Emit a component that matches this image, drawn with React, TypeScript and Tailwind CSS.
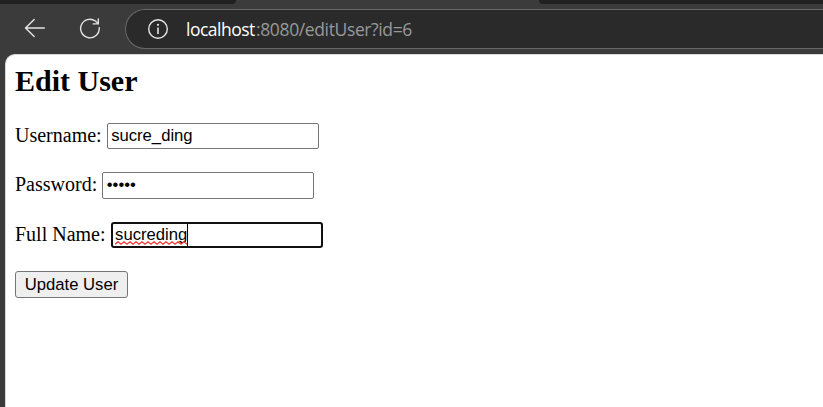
import type { ReactNode } from 'react';

const sans = "font-['Liberation_Sans',Arial,sans-serif]";

function BackIcon() {
  return (
    <svg width="22" height="20" viewBox="0 0 22 20" fill="none" stroke="#e4e4e4" strokeWidth="1.4" strokeLinecap="round" strokeLinejoin="round">
      <path d="M20.3 10H1.5M10.2 1.4L1.5 10L10.2 18.6" />
    </svg>
  );
}

function ReloadIcon() {
  return (
    <svg width="22" height="22" viewBox="0 0 22 22" fill="none" stroke="#e4e4e4" strokeWidth="1.4" strokeLinecap="round" strokeLinejoin="round">
      <path d="M20.2 9.6A9.3 9.3 0 1 1 16.4 3L19.2 5.5" />
      <path d="M19.3 0.9V5.9H14.2" />
    </svg>
  );
}

function InfoIcon() {
  return (
    <svg width="22" height="22" viewBox="0 0 22 22" fill="none" stroke="#e4e4e4">
      <circle cx="11" cy="11" r="9.3" strokeWidth="1.4" />
      <path d="M11 9.5V16" strokeWidth="1.6" />
      <circle cx="11" cy="6.8" r="1.1" fill="#e4e4e4" stroke="none" />
    </svg>
  );
}

function SpellingMark() {
  return (
    <svg className="absolute left-0 top-[17px]" width="73" height="4" viewBox="0 0 73 4" fill="none">
      <path
        d="M0 3.2L3 0.8L6 3.2L9 0.8L12 3.2L15 0.8L18 3.2L21 0.8L24 3.2L27 0.8L30 3.2L33 0.8L36 3.2L39 0.8L42 3.2L45 0.8L48 3.2L51 0.8L54 3.2L57 0.8L60 3.2L63 0.8L66 3.2L69 0.8L72 3.2"
        stroke="#ec3b32"
        strokeWidth="1.3"
      />
    </svg>
  );
}

function Row({ label, children }: { label: string; children: ReactNode }) {
  return (
    <div className="flex h-[27px] items-start gap-[5px]">
      <span className="whitespace-nowrap leading-[24px]">{label}</span>
      {children}
    </div>
  );
}

export default function App() {
  const field = `h-[26px] w-[212px] rounded-[2px] border border-[#767676] bg-white px-[3.5px] text-[16.67px] leading-[24px] text-black ${sans}`;
  return (
    <div className="flex h-[407px] w-[823px] flex-col overflow-hidden bg-[#3b3b3b]">
      <div className="flex h-[4px] shrink-0 justify-between">
        <div className="w-[236px] rounded-br-[8px] bg-[#202020]" />
        <div className="w-[284px] rounded-bl-[8px] bg-[#202020]" />
      </div>
      <div className="flex h-[50px] shrink-0 items-start pt-[5px]">
        <div className="ml-[24px] mt-[9px]"><BackIcon /></div>
        <div className="ml-[33px] mt-[9px]"><ReloadIcon /></div>
        <div className="ml-[24px] flex h-[40px] flex-1 items-center rounded-l-full border border-r-0 border-[#686868] bg-[#2a2a2a] pl-[21px]">
          <InfoIcon />
          <div className="-mt-px ml-[17px] flex whitespace-nowrap font-['Open_Sans','Noto_Sans',sans-serif] text-[17.5px] leading-[24px]">
            <span className="w-[70px] tracking-[-0.5px] text-white">localhost</span>
            <span className="tracking-[-0.37px] text-[#999999]">:8080/editUser?id=6</span>
          </div>
        </div>
      </div>
      <main className="ml-[5px] flex-1 rounded-tl-[10px] border-l border-t border-[#d8d8d8] bg-white pl-[9px] pt-[9px] font-['Liberation_Serif','Times_New_Roman',serif] text-[20px] text-black">
        <h1 className="text-[30px] font-bold leading-[34px]">Edit User</h1>
        <form className="mt-[25px] flex flex-col items-start">
          <Row label="Username:">
            <div className={field}>sucre_ding</div>
          </Row>
          <div className="mt-[22px]">
            <Row label="Password:">
              <div className={`${field} h-[27px]!`}>•••••</div>
            </Row>
          </div>
          <div className="mt-[23px]">
            <Row label="Full Name:">
              <div className={`h-[26px] w-[212px] rounded-[3px] border-2 border-[#101010] bg-white px-[2.5px] text-[16.67px] leading-[22px] ${sans}`}>
                <span className="relative inline-block border-r border-black">
                  sucreding
                  <SpellingMark />
                </span>
              </div>
            </Row>
          </div>
          <button type="button" className={`mt-[22px] h-[27px] w-[113px] rounded-[3px] border border-[#767676] bg-[#efefef] text-center text-[16.67px] leading-[25px] ${sans}`}>
            Update User
          </button>
        </form>
      </main>
    </div>
  );
}
